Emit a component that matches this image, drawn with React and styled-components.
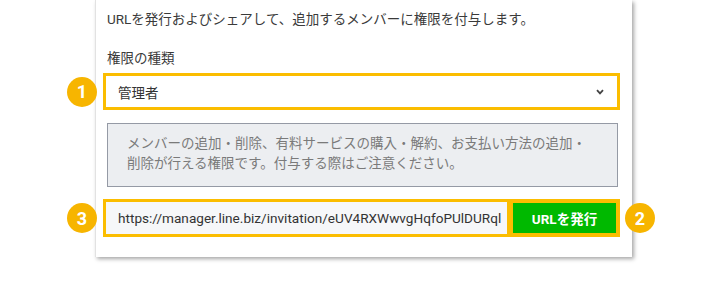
import React from "react";
import styled, { createGlobalStyle } from "styled-components";

const Global = createGlobalStyle`
  html, body { margin: 0; padding: 0; background: #ffffff; }
  body { font-family: Roboto, "Noto Sans CJK JP", sans-serif; color: #333; }
  * { box-sizing: border-box; }
`;

const Page = styled.div`
  width: 714px;
  height: 284px;
  padding-left: 95px;
  overflow: hidden;
`;

const Card = styled.div`
  width: 537px;
  background: #fff;
  border-left: 1px solid #e2e2e2;
  box-shadow: 2px 2px 4px rgba(0, 0, 0, 0.35);
  padding: 9px 12px 20px 7px;
  display: flex;
  flex-direction: column;
`;

const Text = styled.p`
  margin: ${(p) => p.$mt || 0}px 0 0 0;
  padding-left: 4px;
  font-size: ${(p) => p.$size || 13.5}px;
  line-height: 20px;
  color: #3a3a3a;
  white-space: nowrap;
`;

const Frame = styled.div`
  position: relative;
  margin-top: ${(p) => p.$mt}px;
  height: ${(p) => p.$h}px;
  border: 3px solid #fbbd00;
  background: ${(p) => (p.$bg ? "#fbbd00" : "#fff")};
  display: flex;
  align-items: center;
`;

const Badge = styled.span`
  position: absolute;
  top: 50%;
  ${(p) => (p.$side === "right" ? "right: -38px;" : "left: -39px;")}
  transform: translateY(-50%);
  width: 30px;
  height: 30px;
  border-radius: 50%;
  background: #f7b500;
  color: #fff;
  font-family: Roboto, sans-serif;
  font-weight: 700;
  font-size: 18px;
  display: flex;
  align-items: center;
  justify-content: center;
`;

const SelectValue = styled.div`
  flex: 1;
  padding-left: 12px;
  font-size: 13.5px;
  color: #333;
`;

const Chevron = styled.svg`
  width: 8px;
  height: 6px;
  margin-right: 13px;
`;

const InfoBox = styled.div`
  margin: 13px 2px 0 4px;
  background: #eceef1;
  border: 1px solid #959aa5;
  padding: 9px 18px 13px 19px;
  font-size: 13.5px;
  line-height: 20px;
  color: #7a7a7a;
`;

const UrlInput = styled.div`
  width: 401px;
  height: 100%;
  background: #f6f7f9;
  padding-left: 12px;
  display: flex;
  align-items: center;
  font-family: Roboto, sans-serif;
  font-size: 13.6px;
  color: #333;
  white-space: nowrap;
  overflow: hidden;
`;

const Button = styled.button`
  margin-left: 6px;
  width: 103px;
  height: 30px;
  border: none;
  background: #00b900;
  color: #fff;
  font-family: Roboto, "Noto Sans CJK JP", sans-serif;
  font-weight: 700;
  font-size: 13.5px;
  padding: 0;
`;

export default function App() {
  return (
    <>
      <Global />
      <Page>
        <Card>
          <Text>URLを発行およびシェアして、追加するメンバーに権限を付与します。</Text>
          <Text $mt={19}>権限の種類</Text>
          <Frame $mt={5} $h={37}>
            <Badge>1</Badge>
            <SelectValue>管理者</SelectValue>
            <Chevron viewBox="0 0 8 6">
              <path d="M1 1.2 L4 4.4 L7 1.2" fill="none" stroke="#444" strokeWidth="1.8" />
            </Chevron>
          </Frame>
          <InfoBox>
            メンバーの追加・削除、有料サービスの購入・解約、お支払い方法の追加・
            <br />
            削除が行える権限です。付与する際はご注意ください。
          </InfoBox>
          <Frame $mt={12} $h={38} $bg>
            <Badge>3</Badge>
            <UrlInput>https://manager.line.biz/invitation/eUV4RXWwvgHqfoPUlDURql</UrlInput>
            <Button>URLを発行</Button>
            <Badge $side="right">2</Badge>
          </Frame>
        </Card>
      </Page>
    </>
  );
}
